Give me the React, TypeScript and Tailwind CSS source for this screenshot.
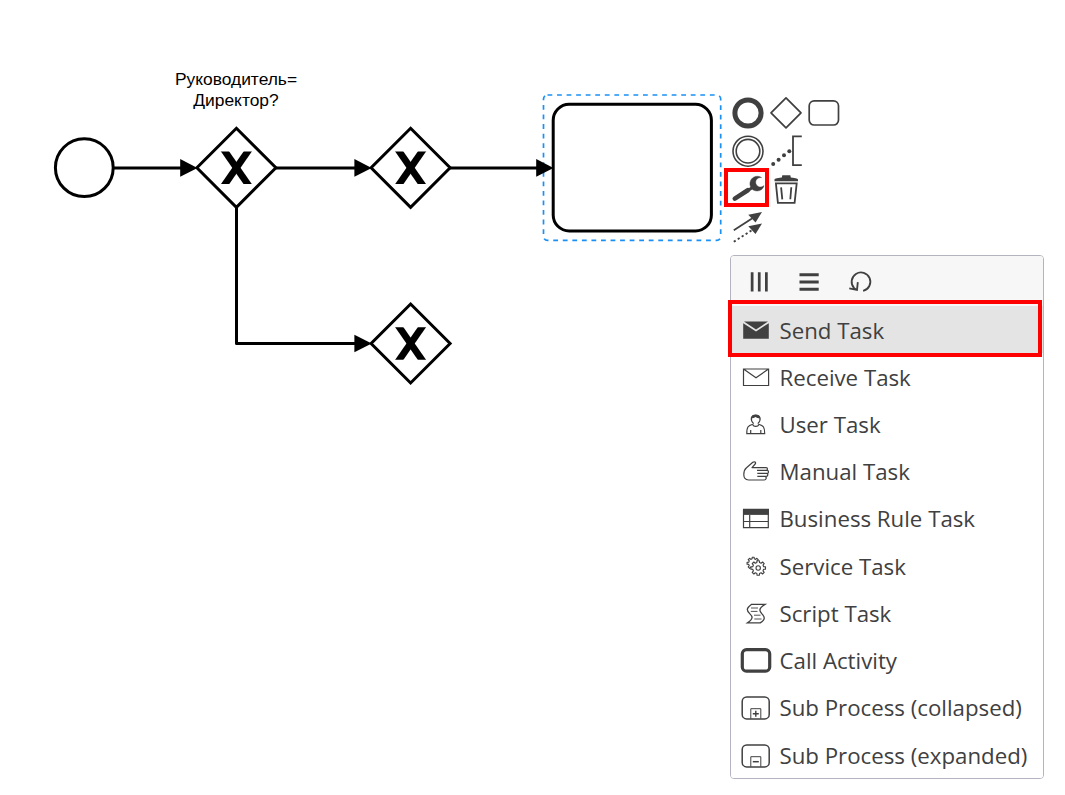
import type { ReactNode } from "react";

const INK = "#404040";

function gearPath(cx: number, cy: number, inner: number, outer: number, teeth: number) {
  const points: string[] = [];
  const step = (Math.PI * 2) / teeth;
  for (let i = 0; i < teeth; i++) {
    const a = i * step - Math.PI / 2;
    const corners: [number, number][] = [
      [inner, -0.3],
      [outer, -0.2],
      [outer, 0.2],
      [inner, 0.3],
    ];
    for (const [r, o] of corners) {
      points.push(`${(cx + r * Math.cos(a + o * step)).toFixed(2)} ${(cy + r * Math.sin(a + o * step)).toFixed(2)}`);
    }
  }
  return `M${points.join("L")}Z`;
}

/* ---------- Diagram ---------- */

function Gateway({ x, y }: { x: number; y: number }) {
  return (
    <g transform={`translate(${x} ${y})`} stroke="#000">
      <path d="M0-39.5 39.5 0 0 39.5-39.5 0Z" fill="#fff" strokeWidth="3" />
      <g clipPath="url(#marker)" strokeWidth="6.8">
        <line x1="-13.9" y1="-20" x2="13.9" y2="20" />
        <line x1="13.9" y1="-20" x2="-13.9" y2="20" />
      </g>
    </g>
  );
}

function Arrow({ x, y }: { x: number; y: number }) {
  return <path d={`M${x} ${y}l-17.3-8.8v17.6z`} fill="#000" />;
}

function Diagram() {
  return (
    <svg className="block h-[795px] w-[1065px]" viewBox="0 0 1065 795" fill="none">
      <defs>
        <clipPath id="marker">
          <rect x="-17" y="-16.3" width="34" height="32.6" />
        </clipPath>
      </defs>
      <rect x="543.5" y="95" width="177.2" height="145.4" rx="4" stroke="#1a90f5" strokeWidth="1.7" strokeDasharray="4.8 4.75" />
      <circle cx="84.3" cy="167.7" r="28.9" stroke="#000" strokeWidth="3" />
      <g stroke="#000" strokeWidth="3">
        <path d="M113 167.9H185M276 167.9H358M450 167.9H540" />
        <path d="M236.5 208V343.5H358" strokeLinejoin="round" />
      </g>
      <Gateway x={236.4} y={167.8} />
      <Gateway x={410.6} y={167.8} />
      <Gateway x={410.6} y={343.5} />
      <rect x="553.2" y="104.3" width="158.2" height="126.7" rx="16" fill="#fff" stroke="#000" strokeWidth="3" />
      <Arrow x={197.5} y={167.9} />
      <Arrow x={371.7} y={167.9} />
      <Arrow x={553.5} y={167.9} />
      <Arrow x={371.7} y={343.5} />
    </svg>
  );
}

/* ---------- Context pad ---------- */

const padIcons: ReactNode[] = [
  <circle key="end" cx="19" cy="19" r="13.1" strokeWidth="5" />,
  <path key="gateway" d="M19 3.8 34 18.8 19 33.8 4 18.8Z" strokeWidth="1.7" strokeLinejoin="round" />,
  <rect key="task" x="4.2" y="6.8" width="29.3" height="24.2" rx="5" strokeWidth="1.7" />,
  <g key="event" strokeWidth="1.6">
    <circle cx="19" cy="19.2" r="15" />
    <circle cx="19" cy="19.2" r="11.8" />
  </g>,
  <g key="annotation">
    <path d="M34.8 4.3H26V33.2H34.8" strokeWidth="1.8" />
    <g fill={INK} stroke="none">
      <circle cx="6.2" cy="32" r="2" />
      <circle cx="11.6" cy="27.8" r="2" />
      <circle cx="17" cy="23.3" r="2" />
      <circle cx="22.3" cy="19.2" r="2" />
    </g>
  </g>,
  null,
  <g key="wrench">
    <path d="M5.8 28.6 18.8 20.2" strokeWidth="4.6" strokeLinecap="round" />
    <path d="M18 21 24 17.2" strokeWidth="3" />
    <path
      d="M32.6 7.6C28.8 5 23.4 6.3 21.5 10.7C19.4 15.8 23 21 28.2 21C31.6 21 34.4 18.8 35 15.6C33.6 17.2 31.2 17.4 29.2 16.4C26.8 15.2 26 12.4 27.2 10.1C28.3 8 30.6 7.2 32.6 7.6Z"
      fill={INK}
      stroke={INK}
      strokeWidth="0.4"
    />
  </g>,
  <g key="trash">
    <path d="M7.5 11.2V9.6C7.5 8.6 9 8.2 14.8 7.4L15.3 5.2H23.3L23.8 7.4C29.5 8.2 31 8.6 31 9.6V11.2Z" fill={INK} stroke="none" />
    <path d="M8.9 13.4H29.7L27.6 32.8H10.9Z" strokeWidth="1.8" />
    <path d="M14.1 17.3 15.3 29.3M24.3 17.3 23.3 29.3" strokeWidth="1.8" />
  </g>,
  null,
  <g key="connect">
    <path d="M4.8 22.3 23 10.6" strokeWidth="1.8" />
    <path d="M33 4 26.5 14.6 19.3 6.8Z" fill={INK} stroke="none" />
    <path d="M4.8 33.8 23 22.1" strokeWidth="1.9" strokeDasharray="2.2 2.5" />
    <path d="M33 15.4 26.5 26 19.3 18.2Z" fill={INK} stroke="none" />
  </g>,
];

function ContextPad() {
  return (
    <div className="absolute left-[729px] top-[94px] grid grid-cols-3">
      {padIcons.map((icon, i) => (
        <svg key={i} className="size-[38px] overflow-visible" viewBox="0 0 38 38" fill="none" stroke={INK}>
          {icon}
        </svg>
      ))}
    </div>
  );
}

/* ---------- Popup menu ---------- */

const subProcess = (
  <>
    <rect x="1.2" y="3.9" width="27" height="22" rx="4.5" strokeWidth="1.5" />
    <path d="M9.8 25.7V15.7H19.8V25.7" strokeWidth="1" />
  </>
);

const entries: { label: string; icon: ReactNode }[] = [
  {
    label: "Send Task",
    icon: (
      <g fill={INK} stroke="none">
        <path d="M3 5.6H27L15 13.4Z" />
        <path d="M2.2 7.2 15 15.4 27.8 7.2V22.8H2.2Z" />
      </g>
    ),
  },
  {
    label: "Receive Task",
    icon: <path d="M2.5 6H27.6V22.5H2.5ZM2.5 6 15 14.7 27.6 6" strokeWidth="1.2" />,
  },
  {
    label: "User Task",
    icon: (
      <g strokeWidth="1.2">
        <path d="M11.8 14.2C6.8 15.7 5.8 17 5.8 23.6H23.7C23.7 17 22.5 15.7 17.7 14.2" />
        <path d="M11.8 14.2C12 17 17.5 17 17.7 14.2M9.7 23.6V20M19.8 23.6V20" />
        <path d="M12.7 13.6C8.8 10 9.8 5 14.7 5S20.6 10 16.8 13.6" />
        <path d="M10.3 8.4C10.1 3.5 19.3 3.5 19.2 8.4C17 8.4 15.7 7.9 14.5 7C13.4 7.9 12 8.4 10.3 8.4Z" fill={INK} stroke="none" />
      </g>
    ),
  },
  {
    label: "Manual Task",
    icon: (
      <path
        d="M13.6 10.6H25C27 10.6 27 13.4 25 13.4H16M25 13.4H26C28 13.4 28 16.4 26 16.4H16.3M25.5 16.4C27.4 16.4 27.2 19.4 25.2 19.4H16.3M24 19.4C26 19.8 25.4 23 23.2 23H7.6C4.2 23 2.8 20.8 2.8 17.5C2.8 13.5 3.6 12.2 5.5 10.7L11.8 5.3C13.5 4.1 15.3 5.3 14.2 7L11 10.6H14"
        strokeWidth="1.2"
        strokeLinejoin="round"
      />
    ),
  },
  {
    label: "Business Rule Task",
    icon: (
      <g strokeWidth="1.2">
        <path d="M2.5 6H27.3V23.6H2.5ZM2.5 17.5H27.3M8.7 11V23.6" />
        <path d="M2 4.8H28V10.9H2Z" fill={INK} stroke="none" />
      </g>
    ),
  },
  {
    label: "Service Task",
    icon: (
      <g strokeWidth="1.1" strokeLinejoin="round">
        <path d={gearPath(12.2, 11.3, 4.6, 6.2, 8)} />
        <path d={gearPath(17.2, 16, 5.6, 7.4, 8)} fill="#fff" />
        <circle cx="17.2" cy="16" r="2.2" />
      </g>
    ),
  },
  {
    label: "Script Task",
    icon: (
      <g strokeWidth="1.3">
        <path d="M10.3 5.4H24C15.5 10.6 19.5 13.1 22 16.1C24.5 19.1 23 21.6 19.2 23.9H6.5C13 19.4 11.5 17.4 8.5 14.4C5 11.1 5.8 8.8 10.3 5.4Z" />
        <path d="M10 9H17M9.8 12.4H16.5M13 16.2H19.5M13.3 20H20.5" strokeWidth="0.9" />
      </g>
    ),
  },
  {
    label: "Call Activity",
    icon: <rect x="1.3" y="3.6" width="27.4" height="21.6" rx="4.2" strokeWidth="3.2" />,
  },
  {
    label: "Sub Process (collapsed)",
    icon: (
      <>
        {subProcess}
        <path d="M11.8 20.7H17.8M14.8 17.7V23.7" strokeWidth="1.4" />
      </>
    ),
  },
  {
    label: "Sub Process (expanded)",
    icon: (
      <>
        {subProcess}
        <path d="M11.8 20.7H17.8" strokeWidth="1.5" />
      </>
    ),
  },
];

function PopupMenu() {
  return (
    <div className="absolute left-[730px] top-[255px] flex h-[523.5px] w-[314px] flex-col overflow-hidden rounded-[4px] border border-[#b4b4c0] bg-white">
      <div className="flex h-[50px] shrink-0 items-center gap-[20px] bg-[#f7f7f7] pl-[12.5px] pt-[2px]">
        <svg className="size-[30.5px]" viewBox="0 0 30 30" fill="none" stroke={INK} strokeWidth="2.7">
          <path d="M8 5.2V24M15 5.2V24M22 5.2V24" />
        </svg>
        <svg className="size-[30.5px]" viewBox="0 0 30 30" fill="none" stroke={INK} strokeWidth="2.9">
          <path d="M5.4 7.6H24.3M5.4 14.7H24.3M5.4 21.8H24.3" />
        </svg>
        <svg className="size-[30.5px]" viewBox="0 0 30 30" fill="none" stroke={INK} strokeWidth="1.8">
          <path d="M17.8 23.5A9.2 9.2 0 1 0 9 20.8L11.3 22.4M4.2 21 11.8 22.5 12.6 14.8" />
        </svg>
      </div>
      <ul className="flex flex-col">
        {entries.map(({ label, icon }, i) => (
          <li
            key={label}
            className={
              "flex h-[47.22px] shrink-0 items-center gap-[9px] pl-[9.5px] " + (i === 0 ? "bg-[#e4e4e4]" : "bg-white")
            }
          >
            <svg className="mt-[2px] size-[30px] shrink-0 overflow-visible" viewBox="0 0 30 30" fill="none" stroke={INK}>
              {icon}
            </svg>
            <span className="whitespace-nowrap pt-[2px] font-['Open_Sans',sans-serif] text-[22.25px] leading-[30px] text-[#404040]">
              {label}
            </span>
          </li>
        ))}
      </ul>
    </div>
  );
}

export default function App() {
  return (
    <main className="relative h-[795px] w-[1065px] overflow-hidden bg-white">
      <Diagram />
      <div className="absolute left-[156px] top-[69px] w-[160px] text-center font-['Liberation_Sans',Arial,sans-serif] text-[17.4px] leading-[21px] text-black">
        Руководитель=
        <br />
        Директор?
      </div>
      <ContextPad />
      <PopupMenu />
      <div className="absolute left-[724px] top-[168px] h-[39px] w-[45px] border-4 border-[#ff0000]" />
      <div className="absolute left-[728px] top-[300px] h-[57px] w-[314px] border-4 border-[#ff0000]" />
    </main>
  );
}
